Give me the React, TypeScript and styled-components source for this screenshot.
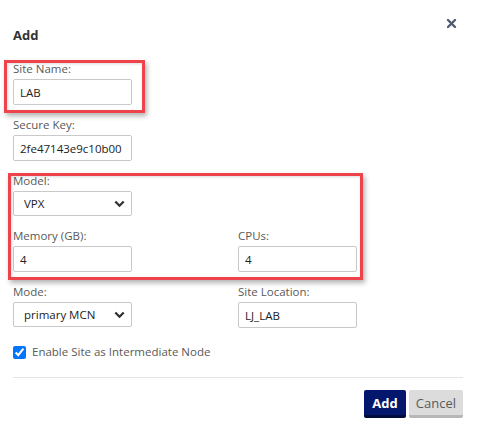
import React from "react";
import styled, { createGlobalStyle } from "styled-components";

const GlobalStyle = createGlobalStyle`
  body {
    margin: 0;
    background: #fff;
    font-family: "Open Sans", "Noto Sans", Arial, sans-serif;
  }
`;

const Page = styled.div`
  width: 480px;
  height: 430px;
  display: flex;
  overflow: hidden;
`;

const Dialog = styled.div`
  flex: 1;
  position: relative;
  padding: 27px 17px 0 13px;
  box-sizing: border-box;
`;

const EdgeBar = styled.div`
  width: 2px;
  background: linear-gradient(#8c8c8c 0, #8c8c8c 103px, #9c9c9c 103px);
`;

const Title = styled.h2`
  margin: 0;
  font-size: 13px;
  line-height: 16px;
  font-weight: 700;
  color: #333;
`;

const CloseButton = styled.button`
  position: absolute;
  top: 18px;
  right: 23px;
  width: 11px;
  height: 11px;
  padding: 0;
  border: none;
  background: none;
  display: flex;
  cursor: pointer;
`;

const Form = styled.div`
  margin-top: 18px;
  display: flex;
  flex-direction: column;
  gap: 12px;
`;

const Section = styled.div`
  position: relative;
  display: flex;
  flex-direction: column;
  gap: 12px;
`;

const Row = styled.div`
  display: grid;
  grid-template-columns: 225px 225px;
`;

const Field = styled.div`
  position: relative;
  display: flex;
  flex-direction: column;
  gap: 2px;
  width: 119px;
`;

const Label = styled.label`
  font-size: 11.5px;
  line-height: 16px;
  color: #595959;
`;

const Input = styled.input`
  width: 119px;
  height: 26px;
  box-sizing: border-box;
  border: 1px solid #c9c9c9;
  border-radius: 2px;
  padding: 0 5px 0 6px;
  font-family: inherit;
  font-size: 11.5px;
  color: #222;
  outline: none;
`;

const Select = styled.select`
  width: 119px;
  height: 25px;
  box-sizing: border-box;
  border: 1px solid #c9c9c9;
  border-radius: 2px;
  padding: 0 24px 0 10px;
  font-family: inherit;
  font-size: 11.5px;
  color: #222;
  background: #fff
    url("data:image/svg+xml;utf8,<svg xmlns='http://www.w3.org/2000/svg' width='11' height='8' viewBox='0 0 11 8'><path d='M1.3 1.5 5.5 5.7 9.7 1.5' fill='none' stroke='%23333' stroke-width='2.3'/></svg>")
    no-repeat right 6px center;
  appearance: none;
  outline: none;
`;

const Highlight = styled.div<{ $top: number; $right: number; $bottom: number; $left: number }>`
  position: absolute;
  top: ${(p) => p.$top}px;
  right: ${(p) => p.$right}px;
  bottom: ${(p) => p.$bottom}px;
  left: ${(p) => p.$left}px;
  border: 3px solid #ef434b;
  box-shadow: 2px 3px 5px rgba(0, 0, 0, 0.3), inset 1px 1px 3px rgba(0, 0, 0, 0.15);
  pointer-events: none;
`;

const CheckRow = styled.label`
  margin-top: 16px;
  display: flex;
  align-items: center;
  gap: 6px;
  font-size: 11.5px;
  line-height: 16px;
  color: #595959;
`;

const Checkbox = styled.input`
  width: 13px;
  height: 13px;
  margin: 0;
`;

const Divider = styled.hr`
  margin: 17px 0 12px;
  border: none;
  border-top: 1px solid #e4e4e4;
`;

const Footer = styled.div`
  display: flex;
  justify-content: flex-end;
  gap: 3px;
`;

const Button = styled.button<{ $primary?: boolean }>`
  height: 28px;
  padding: 0 ${(p) => (p.$primary ? 8 : 7)}px;
  box-sizing: border-box;
  border: none;
  border-bottom: 3px solid ${(p) => (p.$primary ? "#000b3c" : "#b7b7b7")};
  border-radius: 2px;
  background: ${(p) => (p.$primary ? "#03186c" : "#dcdcdc")};
  color: ${(p) => (p.$primary ? "#fff" : "#5a5a5a")};
  font-family: inherit;
  font-size: 13px;
  font-weight: ${(p) => (p.$primary ? 700 : 400)};
  cursor: pointer;
`;

export default function App() {
  return (
    <Page>
      <GlobalStyle />
      <Dialog>
        <Title>Add</Title>
        <CloseButton aria-label="Close">
          <svg width="11" height="11" viewBox="0 0 11 11">
            <path d="M2 2 9 9M9 2 2 9" stroke="#4f5b70" strokeWidth="2.4" strokeLinecap="round" />
          </svg>
        </CloseButton>

        <Form>
          <Row>
            <Field>
              <Label>Site Name:</Label>
              <Input defaultValue="LAB" />
              <Highlight $top={-1} $right={-13} $bottom={-8} $left={-9} />
            </Field>
          </Row>
          <Row>
            <Field>
              <Label>Secure Key:</Label>
              <Input defaultValue="2fe47143e9c10b00" />
            </Field>
          </Row>

          <Section>
            <Row>
              <Field>
                <Label>Model:</Label>
                <Select defaultValue="VPX">
                  <option>VPX</option>
                </Select>
              </Field>
            </Row>
            <Row>
              <Field>
                <Label>Memory (GB):</Label>
                <Input defaultValue="4" />
              </Field>
              <Field>
                <Label>CPUs:</Label>
                <Input defaultValue="4" />
              </Field>
            </Row>
            <Highlight $top={0} $right={100} $bottom={-8} $left={-5} />
          </Section>

          <Row>
            <Field>
              <Label>Mode:</Label>
              <Select defaultValue="primary MCN">
                <option>primary MCN</option>
              </Select>
            </Field>
            <Field>
              <Label>Site Location:</Label>
              <Input defaultValue="LJ_LAB" />
            </Field>
          </Row>
        </Form>

        <CheckRow>
          <Checkbox type="checkbox" defaultChecked />
          Enable Site as Intermediate Node
        </CheckRow>

        <Divider />

        <Footer>
          <Button $primary>Add</Button>
          <Button>Cancel</Button>
        </Footer>
      </Dialog>
      <EdgeBar />
    </Page>
  );
}
